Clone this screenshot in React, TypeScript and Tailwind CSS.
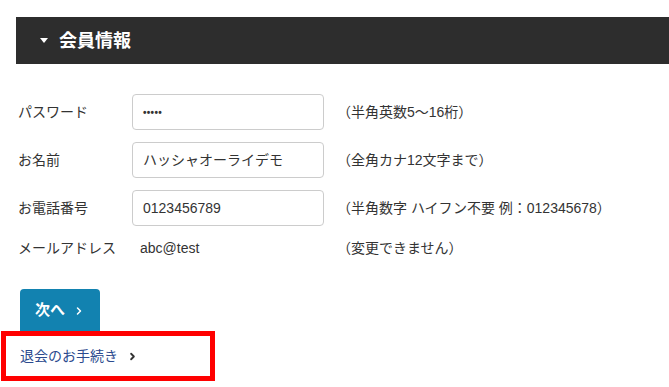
import { ChevronRight } from "lucide-react";

const rows = [
  { label: "パスワード", value: "•••••", hint: "（半角英数5〜16桁）", small: true },
  { label: "お名前", value: "ハッシャオーライデモ", hint: "（全角カナ12文字まで）" },
  { label: "お電話番号", value: "0123456789", hint: "（半角数字 ハイフン不要 例：012345678）" },
];

export default function App() {
  return (
    <div
      className="w-[669px] h-[387px] overflow-hidden bg-white text-[#333]"
      style={{ fontFamily: '"Liberation Sans", "Noto Sans CJK JP", sans-serif' }}
    >
      <div className="pt-[17px] pl-4">
        <div className="h-[47px] bg-[#2d2d2d] flex items-center pl-6">
          <span className="w-0 h-0 border-l-[4px] border-r-[4px] border-t-[5px] border-l-transparent border-r-transparent border-t-white mr-[11px]" />
          <h2 className="text-white font-bold text-[18px] leading-none">会員情報</h2>
        </div>
      </div>

      <div className="pl-5 pt-[30px] flex flex-col gap-3">
        {rows.map((r) => (
          <div key={r.label} className="flex items-center h-[36px] text-[14px]">
            <div className="w-[112px] -ml-0.5 mr-0.5">{r.label}</div>
            <div className="w-[192px] h-[36px] border border-[#ccc] rounded-[4px] flex items-center pl-[10px] text-[14px]">
              <span className={r.small ? "text-[10px] font-bold tracking-[0.3px]" : ""}>{r.value}</span>
            </div>
            <div className="ml-[13px]">{r.hint}</div>
          </div>
        ))}
        <div className="flex items-center h-[20px] text-[14px]">
          <div className="w-[112px] -ml-0.5 mr-0.5">メールアドレス</div>
          <div className="w-[192px] pl-2">abc@test</div>
          <div className="ml-[13px]">（変更できません）</div>
        </div>
      </div>

      <div className="pl-5 mt-[31px]">
        <button className="w-[80px] h-[42px] bg-[#1282b0] rounded-t-[4px] text-white font-bold text-[15px] flex items-center pl-[15px]">
          次へ
          <ChevronRight size={12} strokeWidth={3} className="ml-[8px] mt-px" />
        </button>
      </div>

      <div className="ml-px w-[214px] h-[50px] border-[5px] border-[#f00] flex items-center pl-[14px]">
        <a className="text-[14px] text-[#2b4a8e] flex items-center">
          退会のお手続き
          <ChevronRight size={11} strokeWidth={4} className="ml-[9px] text-[#333]" />
        </a>
      </div>
    </div>
  );
}
